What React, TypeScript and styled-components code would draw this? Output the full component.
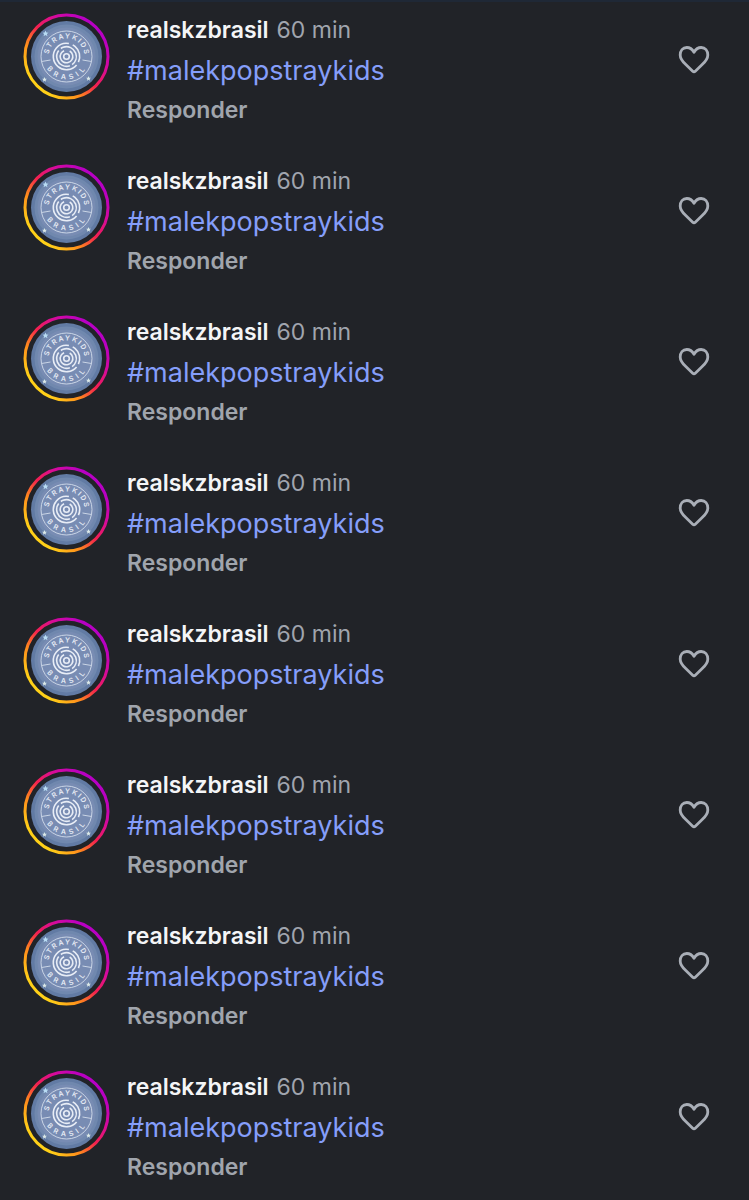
import React, { useState } from "react";
import styled, { createGlobalStyle } from "styled-components";

const GlobalStyle = createGlobalStyle`
  * { box-sizing: border-box; }
  body {
    margin: 0;
    background: #212328;
    font-family: Inter, Roboto, "Liberation Sans", sans-serif;
  }
`;

const CommentList = styled.ul`
  list-style: none;
  margin: 0;
  padding: 0;
  border-top: 2px solid #1f2836;
`;

const CommentRow = styled.li`
  display: flex;
  align-items: flex-start;
  padding: 11px 37px 29px 23px;
  &:last-child { padding-bottom: 18px; }
`;

const AvatarLink = styled.a`
  flex: none;
  width: 87px;
  height: 87px;
  border-radius: 50%;
`;

const AvatarArt = styled.svg`
  display: block;
  width: 100%;
  height: 100%;
`;

const Body = styled.div`
  flex: 1;
  min-width: 0;
  padding: 1px 0 0 17px;
`;

const Heading = styled.div`
  display: flex;
  align-items: baseline;
  gap: 8px;
  line-height: 32px;
`;

const Username = styled.a`
  color: #f4f5f7;
  font-size: 23px;
  font-weight: 600;
  text-decoration: none;
`;

const Time = styled.time`
  color: #a0a5ae;
  font-size: 23px;
`;

const Message = styled.p`
  margin: 0;
  font-size: 27px;
  line-height: 50px;
`;

const Hashtag = styled.a`
  color: #859efa;
  text-decoration: none;
`;

const ReplyButton = styled.button`
  display: block;
  padding: 0;
  border: 0;
  background: none;
  color: #a0a5ad;
  font: inherit;
  font-size: 23px;
  font-weight: 600;
  line-height: 28px;
  cursor: pointer;
`;

const LikeButton = styled.button`
  flex: none;
  margin: 30px 0 0;
  padding: 0;
  border: 0;
  background: none;
  color: #a9aeb7;
  cursor: pointer;
`;

const HeartIcon = styled.svg`
  display: block;
  width: 36px;
  height: 34px;
`;

const STAR = "M0-3 .9-1 3-.8 1.4.6 1.9 2.8 0 1.6-1.9 2.8-1.4.6-3-.8-.9-1Z";

function Avatar({ id }: { id: number }) {
  return (
    <AvatarArt viewBox="-43.5 -43.5 87 87" aria-hidden="true">
      <defs>
        <linearGradient id={`ring${id}`} x1="0.82" y1="0.15" x2="0.15" y2="0.82">
          <stop offset="0" stopColor="#b800c4" />
          <stop offset="0.25" stopColor="#d60a9c" />
          <stop offset="0.5" stopColor="#f3204f" />
          <stop offset="0.74" stopColor="#ff8a1c" />
          <stop offset="1" stopColor="#ffd018" />
        </linearGradient>
        <path id={`top${id}`} d="M-17.1 5.5A18 18 0 1 1 17.1 5.5" />
        <path id={`bottom${id}`} d="M-22.4 5A23 23 0 0 0 22.4 5" />
      </defs>
      <circle r="41.5" fill="none" stroke={`url(#ring${id})`} strokeWidth="3" />
      <circle r="35.5" fill="#627ba4" />
      <circle r="32" fill="#7088ae" />
      <circle r="29" fill="#788cb3" />
      <g fill="none" stroke="#d3dceb" strokeWidth="0.9">
        <circle r="25.5" />
        <path d="M-25 5-16 3.5M25 5 16 3.5" />
      </g>
      <g fill="none" stroke="#e8edf6" strokeWidth="1.6">
        <circle r="2.8" />
        <circle r="6.3" strokeDasharray="33 6.6" transform="rotate(-60)" />
        <circle r="9.8" strokeDasharray="25 3 30.6 3" transform="rotate(70)" />
        <circle r="13.2" strokeDasharray="55 4 20 4" transform="rotate(40)" />
      </g>
      <g fill="#e4eaf4" fontFamily="Inter, sans-serif" fontSize="7" fontWeight="600" textAnchor="middle">
        <text letterSpacing="1.5"><textPath href={`#top${id}`} startOffset="51%">STRAYKIDS</textPath></text>
        <text letterSpacing="4"><textPath href={`#bottom${id}`} startOffset="52%">BRASIL</textPath></text>
      </g>
      <path d={STAR} fill="#b9dcf4" transform="translate(-21 -23)" />
      <path d={STAR} fill="#dce9e8" transform="translate(-22 23) scale(.8)" />
      <path d={STAR} fill="#dce9e8" transform="translate(22 22) scale(.8)" />
    </AvatarArt>
  );
}

interface CommentData {
  id: number;
  user: string;
  age: string;
  tag: string;
}

const comments: CommentData[] = Array.from({ length: 8 }, (_, id) => ({
  id,
  user: "realskzbrasil",
  age: "60 min",
  tag: "#malekpopstraykids",
}));

function Comment({ id, user, age, tag }: CommentData) {
  const [liked, setLiked] = useState(false);
  return (
    <CommentRow>
      <AvatarLink href="#perfil" aria-label={user}>
        <Avatar id={id} />
      </AvatarLink>
      <Body>
        <Heading>
          <Username href="#perfil">{user}</Username>
          <Time>{age}</Time>
        </Heading>
        <Message>
          <Hashtag href="#tag">{tag}</Hashtag>
        </Message>
        <ReplyButton type="button">Responder</ReplyButton>
      </Body>
      <LikeButton type="button" aria-label="Curtir" aria-pressed={liked} onClick={() => setLiked(!liked)}>
        <HeartIcon viewBox="0 0 36 34" fill={liked ? "currentColor" : "none"} stroke="currentColor" strokeWidth="2.8" strokeLinejoin="round">
          <path d="M18 9.2C16.3 6.3 13.7 4.5 10.8 4.5C6.8 4.5 4.2 7.7 4.2 12C4.2 16.2 6.8 18.8 9.8 21.6L16.7 28.2Q18 29.4 19.3 28.2L26.2 21.6C29.2 18.8 31.8 16.2 31.8 12C31.8 7.7 29.2 4.5 25.2 4.5C22.3 4.5 19.7 6.3 18 9.2Z" />
        </HeartIcon>
      </LikeButton>
    </CommentRow>
  );
}

export default function App() {
  return (
    <>
      <GlobalStyle />
      <CommentList>
        {comments.map((comment) => (
          <Comment key={comment.id} {...comment} />
        ))}
      </CommentList>
    </>
  );
}
